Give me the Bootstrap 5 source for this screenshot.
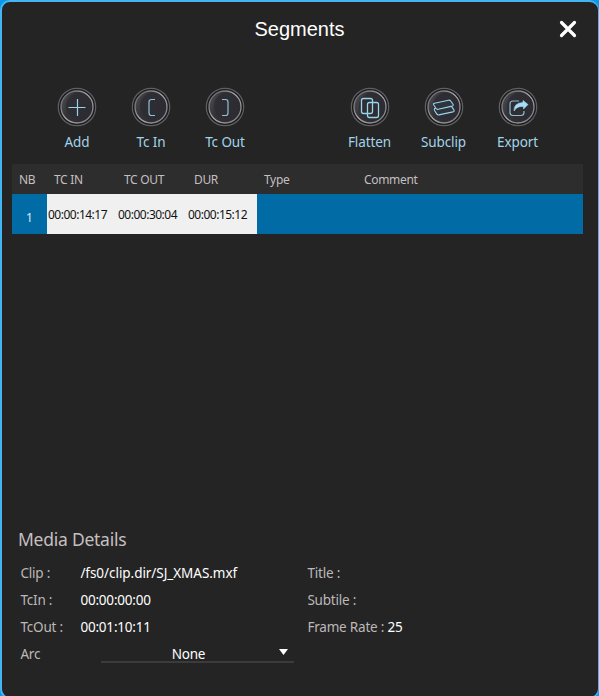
<!DOCTYPE html>
<html lang="en">
<head>
<meta charset="utf-8">
<meta name="viewport" content="width=device-width, initial-scale=1">
<title>Segments</title>
<link href="https://cdn.jsdelivr.net/npm/bootstrap@5.3.0/dist/css/bootstrap.min.css" rel="stylesheet">
<style>
body{background:#0a98ee;height:696px;overflow:hidden;font-family:"Noto Sans","Open Sans",sans-serif;color:#fff}
.panel{height:699px;background:#242424;border:2px solid #43b6f3;border-right-width:1px;border-radius:10px;width:599px}
.title-bar{height:54px;padding-left:38px;padding-right:21px}
.title-bar h1{font:20px/24px "Liberation Sans",Arial,sans-serif}
.close-btn,.tool{background:none;border:0;padding:0}
.tools{padding:0 0 0 38px;height:108px}
.tool{width:74px;height:65px;margin-top:31px;color:#a3d3e9;font-size:13.5px;line-height:20px;letter-spacing:-.1px}
.tool svg{display:block;margin:0 auto 5px}
.gap-mid{width:70.5px}
.seg-grid{display:grid;grid-template-columns:35px 70px 70px 70px 100px 226px;margin-left:10px;width:571px;font-size:12px}
.seg-head{height:30px;background:#2d2d2d;color:#c4bfc0;padding-left:7px;line-height:32px;font-size:12px;letter-spacing:-.33px}
.seg-cell{height:40px;background:#006ba4;line-height:42px}
.seg-time{background:#f0f0f0;color:#111;padding-left:1px;font-size:12px;letter-spacing:-.5px}
.seg-no{padding-right:0;line-height:48px;color:#d7eefa}
.details{margin:291px 0 0 16px}
.details h2{font-size:17.5px;line-height:28px;letter-spacing:-.25px;color:#c4bfc0}
.info{display:grid;grid-template-columns:60px 227px 1fr;grid-auto-rows:27.1px;padding-left:2.400px;padding-top:3px;font-size:13.5px;line-height:26px;letter-spacing:-.2px}
.clip-path{letter-spacing:-.05px}
.lbl{color:#bdb8b8}
.arc{margin-left:20.600px;width:193px;height:22px;border-bottom:2px solid #3b3b3b;padding-right:6px}
.arc span{padding-top:5px;padding-right:3px}
</style>
</head>
<body>
<svg width="0" height="0" class="position-absolute">
<defs>
<linearGradient id="ring" x1="0" y1="0" x2="1" y2="1"><stop offset="0" stop-color="#56565a"/><stop offset=".5" stop-color="#aaaaae"/><stop offset="1" stop-color="#77777c"/></linearGradient>
<linearGradient id="face" x1="0" y1="0" x2="1" y2=".4"><stop offset="0" stop-color="#535357"/><stop offset=".4" stop-color="#323237"/><stop offset="1" stop-color="#2b2b31"/></linearGradient>
<g id="disc"><circle cx="20" cy="20" r="18.7" fill="#1b1b1c" stroke="#606063" stroke-width="1.2"/><circle cx="20" cy="20" r="16" fill="url(#face)" stroke="url(#ring)" stroke-width="1.3"/><circle cx="22" cy="19" r="13" fill="#2d2d33" opacity=".85"/></g>
</defs>
</svg>
<main class="panel">
<header class="title-bar d-flex align-items-center">
<h1 class="flex-grow-1 text-center m-0">Segments</h1>
<button class="close-btn d-flex" aria-label="Close"><svg width="18" height="18" viewBox="0 0 18 18"><path d="M2.5 2.5l13 13m0-13l-13 13" stroke="#fff" stroke-width="3.200" stroke-linecap="round"/></svg></button>
</header>
<nav class="tools d-flex align-items-start">
<button class="tool"><svg width="40" height="40"><use href="#disc"/><path d="M11.5 20.5h17M20.5 12v17" stroke="#9bd0e8" stroke-width="1.2"/></svg>Add</button>
<button class="tool"><svg width="40" height="40"><use href="#disc"/><path d="M24 12.5h-3.500q-2.500 0-2.500 2.500v11q0 2.500 2.500 2.500H24" fill="none" stroke="#8dbfd7" stroke-width="1.2"/></svg>Tc In</button>
<button class="tool"><svg width="40" height="40"><use href="#disc"/><path d="M17 12.5h3.500q2.500 0 2.500 2.500v11q0 2.500-2.500 2.500H17" fill="none" stroke="#8dbfd7" stroke-width="1.2"/></svg>Tc Out</button>
<div class="gap-mid"></div>
<button class="tool"><svg width="40" height="40"><use href="#disc"/><g fill="none" stroke="#9bd3ec" stroke-width="1.3"><rect x="11.5" y="11.5" width="11" height="15" rx="2"/><rect x="17.5" y="15.5" width="11" height="15" rx="2"/></g></svg>Flatten</button>
<button class="tool"><svg width="40" height="40"><use href="#disc"/><g fill="#2d343b" stroke="#9bd3ec" stroke-width="1.1" stroke-linejoin="round"><path d="M10.500 21.500q-.6 1 .2 2.200l2 3.200q.7 1.200 2.200 1l14-3q1.800-.5 1-2l-2-3q-.6-1-2-.8z"/><path d="M10.500 16.200q-1.500.4-.8 1.600l2.300 3.700q.7 1.100 2.200.8l14-3.200q1.600-.5.8-1.800l-2.300-3.300q-.7-1-2.200-.8z"/></g></svg>Subclip</button>
<button class="tool"><svg width="40" height="40"><use href="#disc"/><path d="M21 14h-6q-3 0-3 3v8.500q0 3 3 3h8q3 0 3-3V24" fill="none" stroke="#8fb9cc" stroke-width="1.2"/><path d="M16 24q-.5-8 9-8.500V13.500l5 4-4.500 4.500v-2.500q-6.500-.8-9.500 4.500z" fill="#a4ddf7" stroke="#a4ddf7" stroke-width=".6"/></svg>Export</button>
</nav>
<section class="seg-grid">
<div class="seg-head">NB</div><div class="seg-head">TC IN</div><div class="seg-head">TC OUT</div><div class="seg-head">DUR</div><div class="seg-head">Type</div><div class="seg-head">Comment</div>
<div class="seg-cell seg-no text-center">1</div><div class="seg-cell seg-time">00:00:14:17</div><div class="seg-cell seg-time">00:00:30:04</div><div class="seg-cell seg-time">00:00:15:12</div><div class="seg-cell"></div><div class="seg-cell"></div>
</section>
<section class="details">
<h2 class="fw-normal mb-1">Media Details</h2>
<div class="info">
<span class="lbl">Clip :</span><span class="clip-path">/fs0/clip.dir/SJ_XMAS.mxf</span><span class="lbl">Title :</span>
<span class="lbl">TcIn :</span><span>00:00:00:00</span><span class="lbl">Subtile :</span>
<span class="lbl">TcOut :</span><span>00:01:10:11</span><span><span class="lbl">Frame Rate :</span> 25</span>
<span class="lbl">Arc</span>
<div class="arc d-flex align-items-center"><span class="flex-grow-1 text-center">None</span><svg width="9" height="7"><path d="M0 1h9L4.500 7z" fill="#fff"/></svg></div>
</div>
</section>
</main>
<script src="https://cdn.jsdelivr.net/npm/bootstrap@5.3.0/dist/js/bootstrap.bundle.min.js"></script>
</body>
</html>
